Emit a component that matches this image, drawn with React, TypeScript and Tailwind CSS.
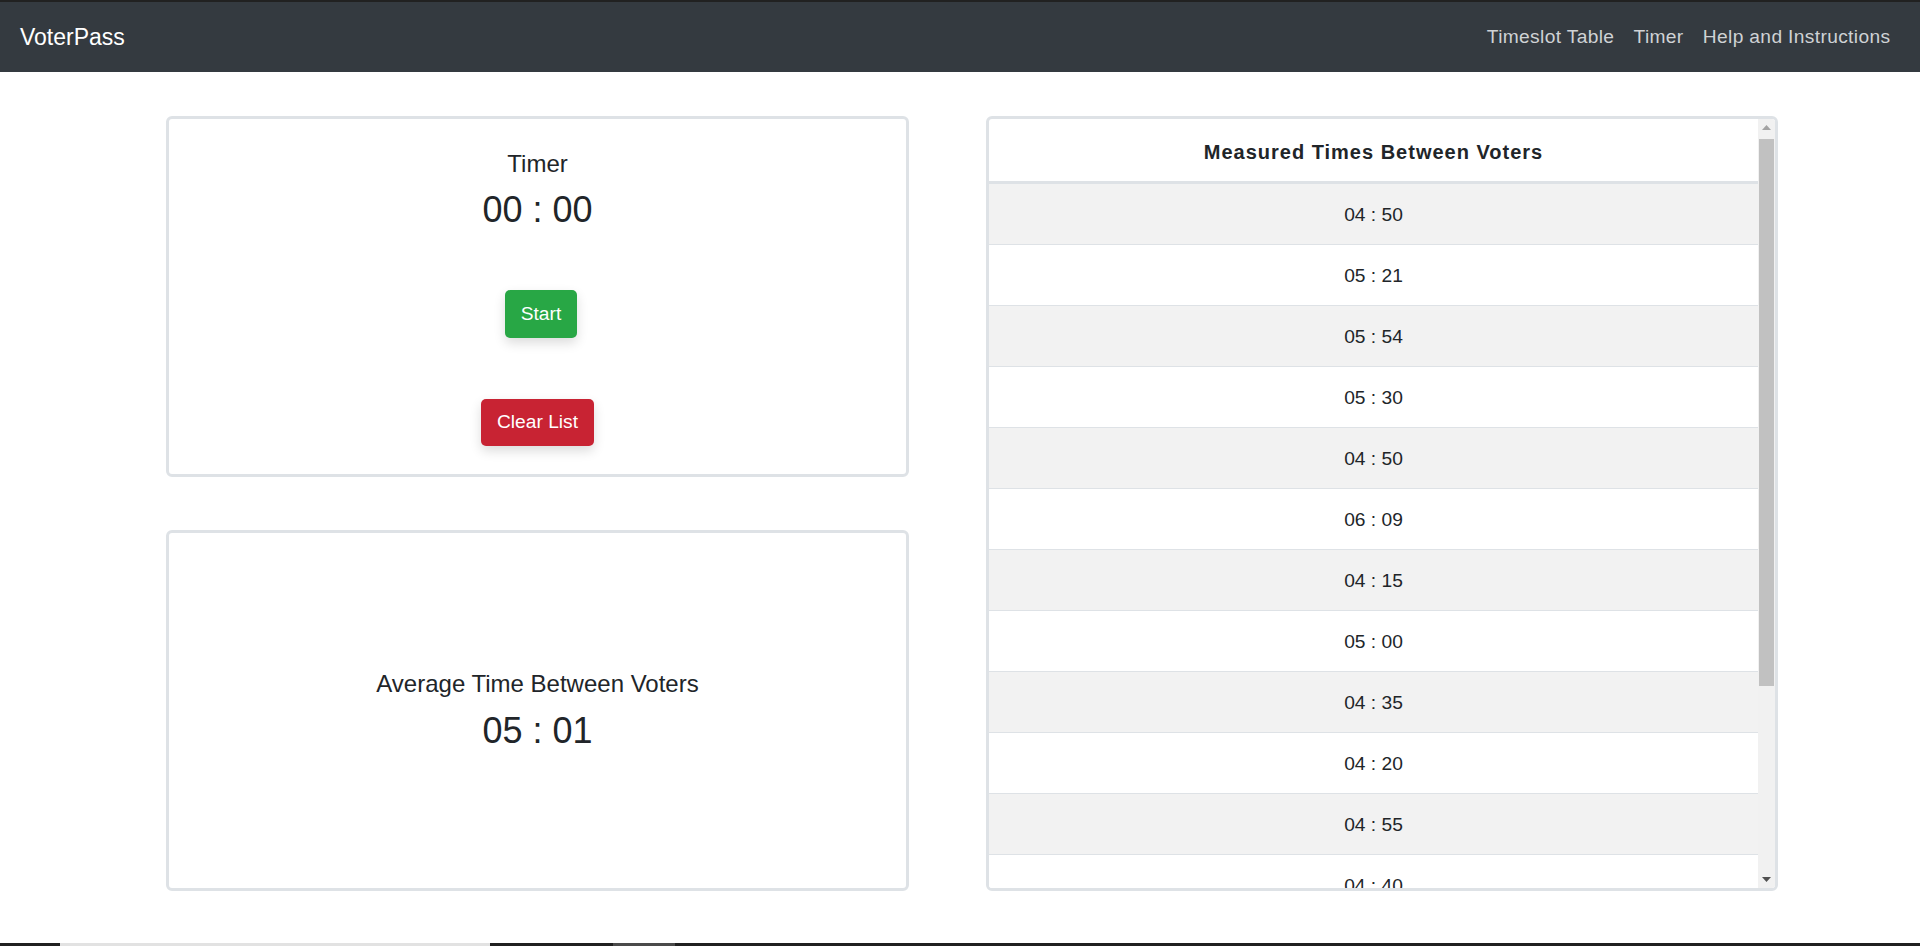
const times = [
  '04 : 50',
  '05 : 21',
  '05 : 54',
  '05 : 30',
  '04 : 50',
  '06 : 09',
  '04 : 15',
  '05 : 00',
  '04 : 35',
  '04 : 20',
  '04 : 55',
  '04 : 40',
];

function Navbar() {
  return (
    <nav className="h-[70px] bg-[#343a40] flex items-center justify-between pl-[20px] pr-[20px]">
      <span className="text-[23px] text-white leading-none">VoterPass</span>
      <div className="flex items-center text-[19.2px] tracking-[0.35px] text-[#cfd2d5]">
        <a className="px-[9.6px]">Timeslot Table</a>
        <a className="px-[9.6px]">Timer</a>
        <a className="px-[9.6px]">Help and Instructions</a>
      </div>
    </nav>
  );
}

function TimerCard() {
  return (
    <div className="h-[361px] border-[3px] border-[#dee2e6] rounded-[6px] bg-white flex flex-col items-center pt-[30px]">
      <div className="text-[24px] leading-[29px]">Timer</div>
      <div className="text-[36px] leading-[43px] mt-[10px]">00 : 00</div>
      <button className="h-[48px] mt-[59px] ml-[7px] px-[16px] rounded-[5px] bg-[#28a745] text-white text-[19.2px] shadow-[0_5px_12px_rgba(0,0,0,0.14)]">
        Start
      </button>
      <button className="h-[47px] mt-[61px] px-[16px] rounded-[5px] bg-[#c82333] text-white text-[19.2px] shadow-[0_5px_12px_rgba(0,0,0,0.14)]">
        Clear List
      </button>
    </div>
  );
}

function AverageCard() {
  return (
    <div className="h-[361px] border-[3px] border-[#dee2e6] rounded-[6px] bg-white flex flex-col items-center justify-center">
      <div className="text-[24px] leading-[29px]">Average Time Between Voters</div>
      <div className="text-[36px] leading-[43px] mt-[11px]">05 : 01</div>
    </div>
  );
}

function TimesTable() {
  return (
    <div className="w-[792px] h-[775px] border-[3px] border-[#dee2e6] rounded-[6px] bg-white flex overflow-hidden">
      <div className="flex-1 overflow-hidden">
        <div className="h-[64px] border-b-2 border-[#dee2e6] flex items-center justify-center pt-[4px] text-[20px] font-bold tracking-[1px]">
          Measured Times Between Voters
        </div>
        {times.map((t, i) => (
          <div
            key={i}
            className={`h-[61px] border-t border-[#dee2e6] flex items-center justify-center pt-[3px] text-[19.2px] ${
              i % 2 === 0 ? 'bg-[#f2f2f2]' : 'bg-white'
            }`}
          >
            {t}
          </div>
        ))}
      </div>
      {/* scrollbar */}
      <div className="w-[17px] bg-[#f1f1f1] flex flex-col">
        <div className="h-[17px] flex items-center justify-center">
          <svg width="9" height="5" viewBox="0 0 9 5">
            <path d="M0 5 L4.5 0 L9 5 Z" fill="#a3a3a3" />
          </svg>
        </div>
        <div className="h-[547px] mt-[3px] mx-[1px] bg-[#c1c1c1]" />
        <div className="flex-1" />
        <div className="h-[17px] flex items-center justify-center">
          <svg width="9" height="5" viewBox="0 0 9 5">
            <path d="M0 0 L9 0 L4.5 5 Z" fill="#505050" />
          </svg>
        </div>
      </div>
    </div>
  );
}

export default function App() {
  return (
    <div
      className="h-[946px] flex flex-col bg-white text-[#212529] overflow-hidden"
      style={{ fontFamily: '"Liberation Sans", Arial, sans-serif' }}
    >
      <div className="h-[2px] bg-[#212121]" />
      <Navbar />
      <main className="flex-1 flex pl-[166px] pt-[44px] gap-[77px]">
        <div className="w-[743px] flex flex-col gap-[53px]">
          <TimerCard />
          <AverageCard />
        </div>
        <TimesTable />
      </main>
      <div className="h-[3px] bg-[#202020] flex">
        <div className="w-[60px]" />
        <div className="w-[430px] bg-[#e2e2e2]" />
        <div className="w-[123px]" />
        <div className="w-[62px] bg-[#4a4a4a]" />
      </div>
    </div>
  );
}
